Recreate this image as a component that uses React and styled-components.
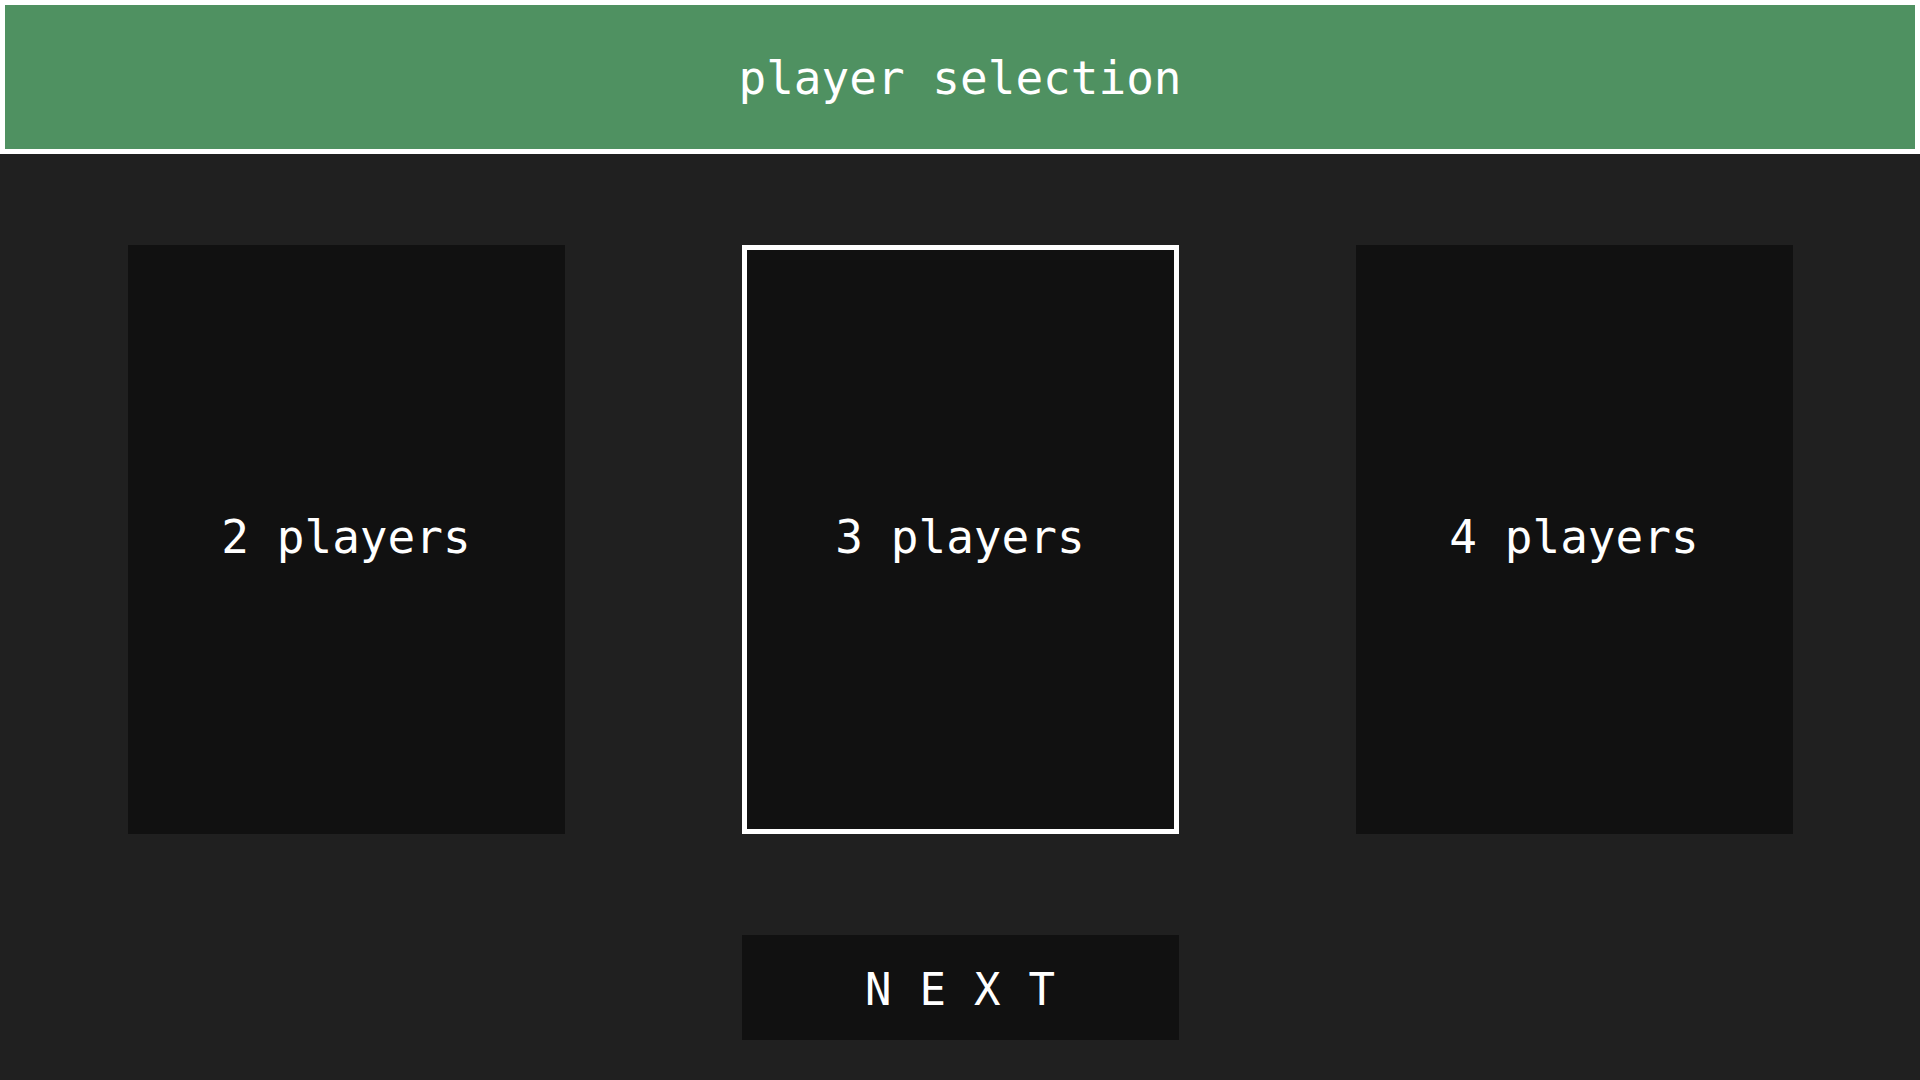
import React, { useState } from "react";
import styled, { createGlobalStyle } from "styled-components";

const GlobalStyle = createGlobalStyle`
  * {
    box-sizing: border-box;
  }

  body {
    margin: 0;
    background-color: #202020;
    font-family: "DejaVu Sans Mono", "Liberation Mono", monospace;
    color: #ffffff;
  }
`;

const PageWrapper = styled.div`
  display: flex;
  flex-direction: column;
  width: 100vw;
  height: 1080px;
  background-color: #202020;
`;

const Header = styled.header`
  display: flex;
  justify-content: center;
  align-items: center;

  height: 154px;
  border: 5px solid #ffffff;
  background-color: #4f9161;

  h1 {
    margin: 0;
    font-size: 46px;
    font-weight: 400;
    padding-top: 2px;
  }
`;

const CardRow = styled.div`
  display: flex;
  justify-content: center;
  gap: 177px;

  margin-top: 91px;
`;

const PlayerCard = styled.button`
  display: flex;
  justify-content: center;
  align-items: center;

  width: 437px;
  height: 589px;
  padding: 0 0 6px 0;
  background-color: #111111;
  border: ${(props) => (props.$selected ? "5px solid #ffffff" : "none")};
  color: #ffffff;
  font-family: inherit;
  font-size: 46px;
  cursor: pointer;
`;

const NextButton = styled.button`
  align-self: center;

  width: 437px;
  height: 105px;
  margin-top: 101px;
  padding: 4px 0 0 28px;
  border: none;
  background-color: #111111;
  color: #ffffff;
  font-family: inherit;
  font-size: 44px;
  letter-spacing: 28px;
  cursor: pointer;
`;

const options = [2, 3, 4];

const App = () => {
  const [selected, setSelected] = useState(3);

  return (
    <>
      <GlobalStyle />
      <PageWrapper>
        <Header>
          <h1>player selection</h1>
        </Header>

        <CardRow>
          {options.map((count) => (
            <PlayerCard
              key={count}
              $selected={selected === count}
              onClick={() => setSelected(count)}
            >
              {count} players
            </PlayerCard>
          ))}
        </CardRow>

        <NextButton>NEXT</NextButton>
      </PageWrapper>
    </>
  );
};

export default App;
